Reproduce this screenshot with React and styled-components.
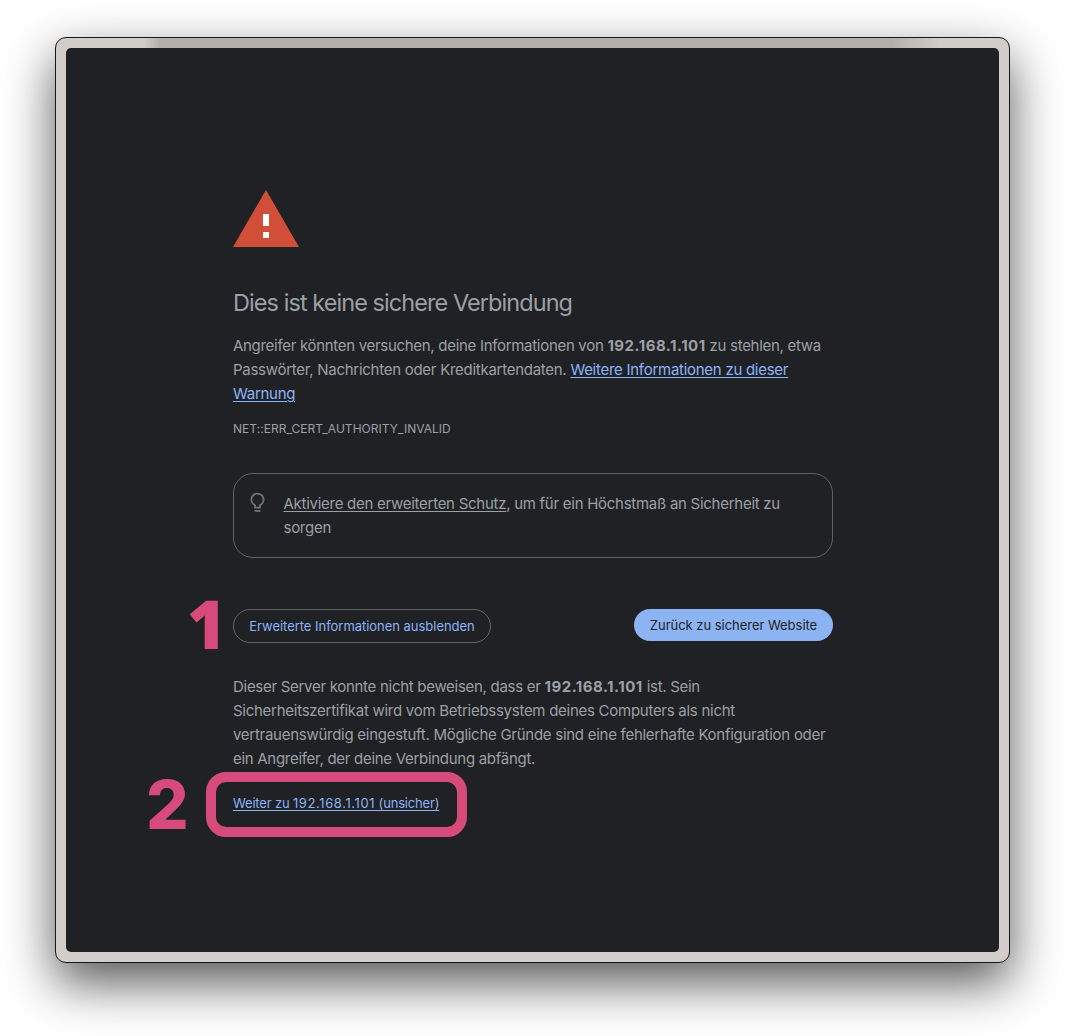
import React from "react";
import styled, { createGlobalStyle } from "styled-components";

const GlobalStyle = createGlobalStyle`
  *, *::before, *::after { box-sizing: border-box; }
  body { margin: 0; background: #fff; font-family: Inter, "Liberation Sans", sans-serif; }
  p, h1 { margin: 0; }
`;

const Desktop = styled.div`
  width: 1065px;
  height: 1036px;
  padding: 37px 55px 73px;
  overflow: hidden;
  background: #fff;
`;

const WindowFrame = styled.div`
  width: 955px;
  height: 926px;
  padding: 10px;
  border: 1px solid #161819;
  border-radius: 11px;
  background:
    linear-gradient(90deg, transparent 88px, #b5afab 104px, #b5afab 835px, transparent 885px) top / 100% 10px no-repeat,
    #d3cdc9;
  box-shadow: 0 20px 50px rgba(0, 0, 0, 0.66);
`;

const Page = styled.main`
  height: 904px;
  padding: 142px 166px 0 167px;
  border-radius: 5px;
  background: #202124;
  color: #9aa0a6;
`;

const Column = styled.div`
  display: flex;
  flex-direction: column;
  width: 600px;
`;

const WarningIcon = styled.svg`
  display: block;
  width: 66px;
  height: 57px;
`;

const Title = styled.h1`
  margin-top: 41px;
  font-size: 23.5px;
  font-weight: 400;
  line-height: 29px;
  letter-spacing: -0.94px;
  white-space: nowrap;
`;

const Paragraph = styled.p`
  margin-top: ${({ $top }) => $top}px;
  font-size: 15px;
  line-height: 24px;
`;

const Line = styled.span`
  display: block;
  letter-spacing: ${({ $tracking = -0.27 }) => $tracking}px;
  white-space: nowrap;
`;

const Host = styled.b`
  letter-spacing: 0.5px;
`;

const HostDigits = styled.span`
  letter-spacing: 0.6px;
`;

const Link = styled.a`
  color: #8ab4f8;
  text-decoration: underline;
  text-underline-offset: 2px;
  text-decoration-thickness: 1px;
`;

const ErrorCode = styled.p`
  margin-top: 15px;
  font-size: 12px;
  line-height: 16px;
  letter-spacing: 0.03px;
  white-space: nowrap;
`;

const Suggestion = styled.section`
  display: flex;
  gap: 16.5px;
  height: 85px;
  margin-top: 36px;
  padding: 18px 16px;
  border: 1px solid #5f6368;
  border-radius: 20px;
  font-size: 15px;
  line-height: 24px;
`;

const BulbIcon = styled.svg`
  flex: none;
  width: 18px;
  height: 24px;
  margin-right: -1px;
`;

const PlainLink = styled(Link)`
  color: inherit;
`;

const Actions = styled.div`
  display: flex;
  justify-content: space-between;
  align-items: flex-start;
  margin-top: 51px;
  position: relative;
`;

const Button = styled.button`
  display: flex;
  align-items: center;
  justify-content: center;
  width: ${({ $width }) => $width}px;
  height: ${({ $primary }) => ($primary ? 32 : 34)}px;
  padding: 0;
  border: ${({ $primary }) => ($primary ? "0" : "1px solid #5f6368")};
  border-radius: 17px;
  background: ${({ $primary }) => ($primary ? "#8cb4f3" : "transparent")};
  color: ${({ $primary }) => ($primary ? "#202124" : "#8ab4f8")};
  font: 400 13px/18px Inter, sans-serif;
  letter-spacing: -0.03px;
  white-space: nowrap;
`;

const ProceedRow = styled.div`
  position: relative;
  margin-top: 23px;
  font-size: 13px;
  line-height: 18px;
  letter-spacing: -0.17px;
  white-space: nowrap;
`;

const Highlight = styled.div`
  position: absolute;
  left: -27px;
  top: -22px;
  width: 261px;
  height: 65px;
  border: 10px solid #d64b7a;
  border-radius: 20px;
`;

const StepNumber = styled.span`
  position: absolute;
  left: ${({ $left }) => $left}px;
  top: ${({ $top }) => $top}px;
  color: #d64b7a;
  font-family: ${({ $family }) => $family}, sans-serif;
  font-size: 67px;
  font-weight: 800;
  line-height: 68px;
  letter-spacing: 0;
`;

export default function App() {
  return (
    <>
      <GlobalStyle />
      <Desktop>
        <WindowFrame>
          <Page>
            <Column>
              <WarningIcon viewBox="1 2 22 19" aria-hidden="true">
                <path d="M1 21h22L12 2z" fill="#d14f38" />
                <path d="M11 16h2v2h-2zM11 10h2v4h-2z" fill="#fff" />
              </WarningIcon>
              <Title>Dies ist keine sichere Verbindung</Title>
              <Paragraph $top={17}>
                <Line $tracking={-0.3}>
                  Angreifer könnten versuchen, deine Informationen von <Host>192.168.1.101</Host> zu stehlen, etwa
                </Line>
                <Line>
                  Passwörter, Nachrichten oder Kreditkartendaten.{" "}
                  <Link>Weitere Informationen zu dieser</Link>
                </Line>
                <Line><Link>Warnung</Link></Line>
              </Paragraph>
              <ErrorCode>NET::ERR_CERT_AUTHORITY_INVALID</ErrorCode>
              <Suggestion>
                <BulbIcon viewBox="0 0 18 24" fill="none" stroke="#6f7378" strokeWidth="1.8" aria-hidden="true">
                  <path d="M5 15.6v-2.4A6.1 6.1 0 1 1 10 13.2v2.4z" />
                  <path d="M4.5 18.9h6" />
                </BulbIcon>
                <p>
                  <Line><PlainLink>Aktiviere den erweiterten Schutz</PlainLink>, um für ein Höchstmaß an Sicherheit zu</Line>
                  <Line>sorgen</Line>
                </p>
              </Suggestion>
              <Actions>
                <StepNumber $left={-46} $top={-20} $family='"Open Sans"'>1</StepNumber>
                <Button $width={258}>Erweiterte Informationen ausblenden</Button>
                <Button $primary $width={199}>Zurück zu sicherer Website</Button>
              </Actions>
              <Paragraph $top={32}>
                <Line $tracking={-0.29}>Dieser Server konnte nicht beweisen, dass er <Host>192.168.1.101</Host> ist. Sein</Line>
                <Line>Sicherheitszertifikat wird vom Betriebssystem deines Computers als nicht</Line>
                <Line>vertrauenswürdig eingestuft. Mögliche Gründe sind eine fehlerhafte Konfiguration oder</Line>
                <Line $tracking={-0.29}>ein Angreifer, der deine Verbindung abfängt.</Line>
              </Paragraph>
              <ProceedRow>
                <StepNumber $left={-87} $top={-23} $family="Inter">2</StepNumber>
                <Highlight />
                <Link>Weiter zu <HostDigits>192.168.1.101</HostDigits> (unsicher)</Link>
              </ProceedRow>
            </Column>
          </Page>
        </WindowFrame>
      </Desktop>
    </>
  );
}
